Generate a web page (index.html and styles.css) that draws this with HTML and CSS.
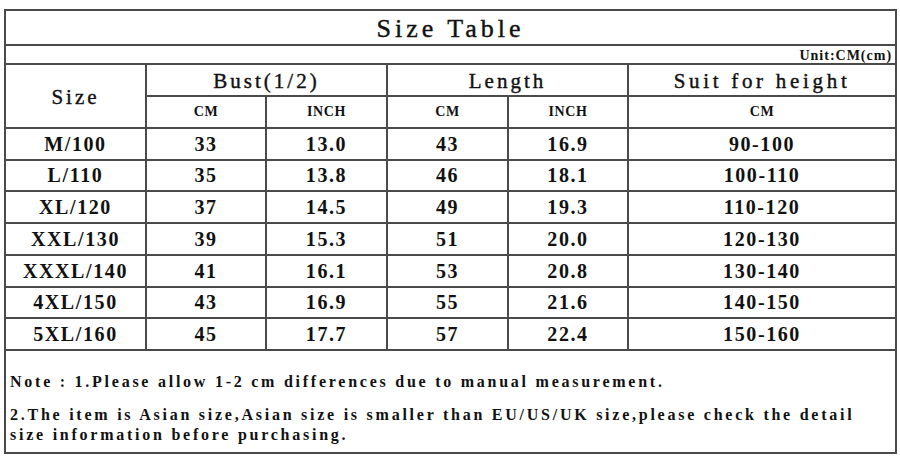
FILE: index.html
```html
<!DOCTYPE html>
<html lang="en">
<head>
<meta charset="utf-8">
<title>Size Table</title>
<link rel="stylesheet" href="styles.css">
</head>
<body>
<table class="size-table">
  <colgroup>
    <col class="c-size">
    <col class="c-num">
    <col class="c-num2">
    <col class="c-num2">
    <col class="c-num">
    <col class="c-height">
  </colgroup>
  <tr class="r-title"><td colspan="6" class="title">Size Table</td></tr>
  <tr class="r-unit"><td colspan="6" class="unit">Unit:CM(cm)</td></tr>
  <tr class="r-head">
    <td rowspan="2" class="head">Size</td>
    <td colspan="2" class="head">Bust(1/2)</td>
    <td colspan="2" class="head">Length</td>
    <td class="head wide">Suit for height</td>
  </tr>
  <tr class="r-head">
    <td class="sub">CM</td>
    <td class="sub">INCH</td>
    <td class="sub">CM</td>
    <td class="sub">INCH</td>
    <td class="sub">CM</td>
  </tr>
  <tr class="r-a"><td>M/100</td><td>33</td><td>13.0</td><td>43</td><td>16.9</td><td>90-100</td></tr>
  <tr class="r-b"><td>L/110</td><td>35</td><td>13.8</td><td>46</td><td>18.1</td><td>100-110</td></tr>
  <tr class="r-a"><td>XL/120</td><td>37</td><td>14.5</td><td>49</td><td>19.3</td><td>110-120</td></tr>
  <tr class="r-a"><td>XXL/130</td><td>39</td><td>15.3</td><td>51</td><td>20.0</td><td>120-130</td></tr>
  <tr class="r-a"><td>XXXL/140</td><td>41</td><td>16.1</td><td>53</td><td>20.8</td><td>130-140</td></tr>
  <tr class="r-b"><td>4XL/150</td><td>43</td><td>16.9</td><td>55</td><td>21.6</td><td>140-150</td></tr>
  <tr class="r-a"><td>5XL/160</td><td>45</td><td>17.7</td><td>57</td><td>22.4</td><td>150-160</td></tr>
  <tr class="r-note">
    <td colspan="6" class="note">
      <p class="note-line first">Note : 1.Please allow 1-2 cm differences due to manual measurement.</p>
      <p class="note-line">2.The item is Asian size,Asian size is smaller than EU/US/UK size,please check the detail<br>size information before purchasing.</p>
    </td>
  </tr>
</table>
</body>
</html>
```

FILE: styles.css
```css
html, body {
  margin: 0;
  padding: 0;
  background: #fff;
}

body {
  font-family: "Liberation Serif", "Times New Roman", serif;
  color: #111;
}

.size-table {
  margin: 9px 0 0 4px;
  border-collapse: collapse;
  table-layout: fixed;
  width: 893px;
}

.c-size { width: 141px; }
.c-num { width: 120px; }
.c-num2 { width: 121px; }
.c-height { width: 268px; }

.size-table td {
  border: 2px solid #4a4a4a;
  padding: 0;
  text-align: center;
  vertical-align: middle;
  font-size: 20px;
  font-weight: bold;
  letter-spacing: 1.6px;
  white-space: nowrap;
}

.r-title { height: 35px; }
.r-unit { height: 19px; }
.r-head { height: 32px; }
.r-a { height: 32px; }
.r-b { height: 31px; }
.r-note { height: 103px; }

.size-table td.title {
  font-size: 26px;
  font-weight: normal;
  letter-spacing: 4px;
  padding-top: 3px;
  -webkit-text-stroke: 0.4px #111;
}

.size-table td.unit {
  font-size: 14px;
  letter-spacing: 1px;
  text-align: right;
  padding-right: 3px;
  line-height: 14px;
  padding-top: 2px;
}

.size-table td.head {
  font-size: 21px;
  font-weight: normal;
  letter-spacing: 3px;
  -webkit-text-stroke: 0.4px #111;
  padding-top: 2px;
}

.size-table td.head.wide {
  letter-spacing: 3.7px;
}

.size-table td.sub {
  font-size: 14px;
  letter-spacing: 0.6px;
}

.size-table td.note {
  text-align: left;
  vertical-align: top;
  padding: 21px 0 0 4px;
  white-space: normal;
}

.note-line {
  margin: 0;
  font-size: 16px;
  line-height: 20px;
  font-weight: bold;
  letter-spacing: 2.75px;
}

.note-line.first {
  margin-bottom: 13px;
}
```
